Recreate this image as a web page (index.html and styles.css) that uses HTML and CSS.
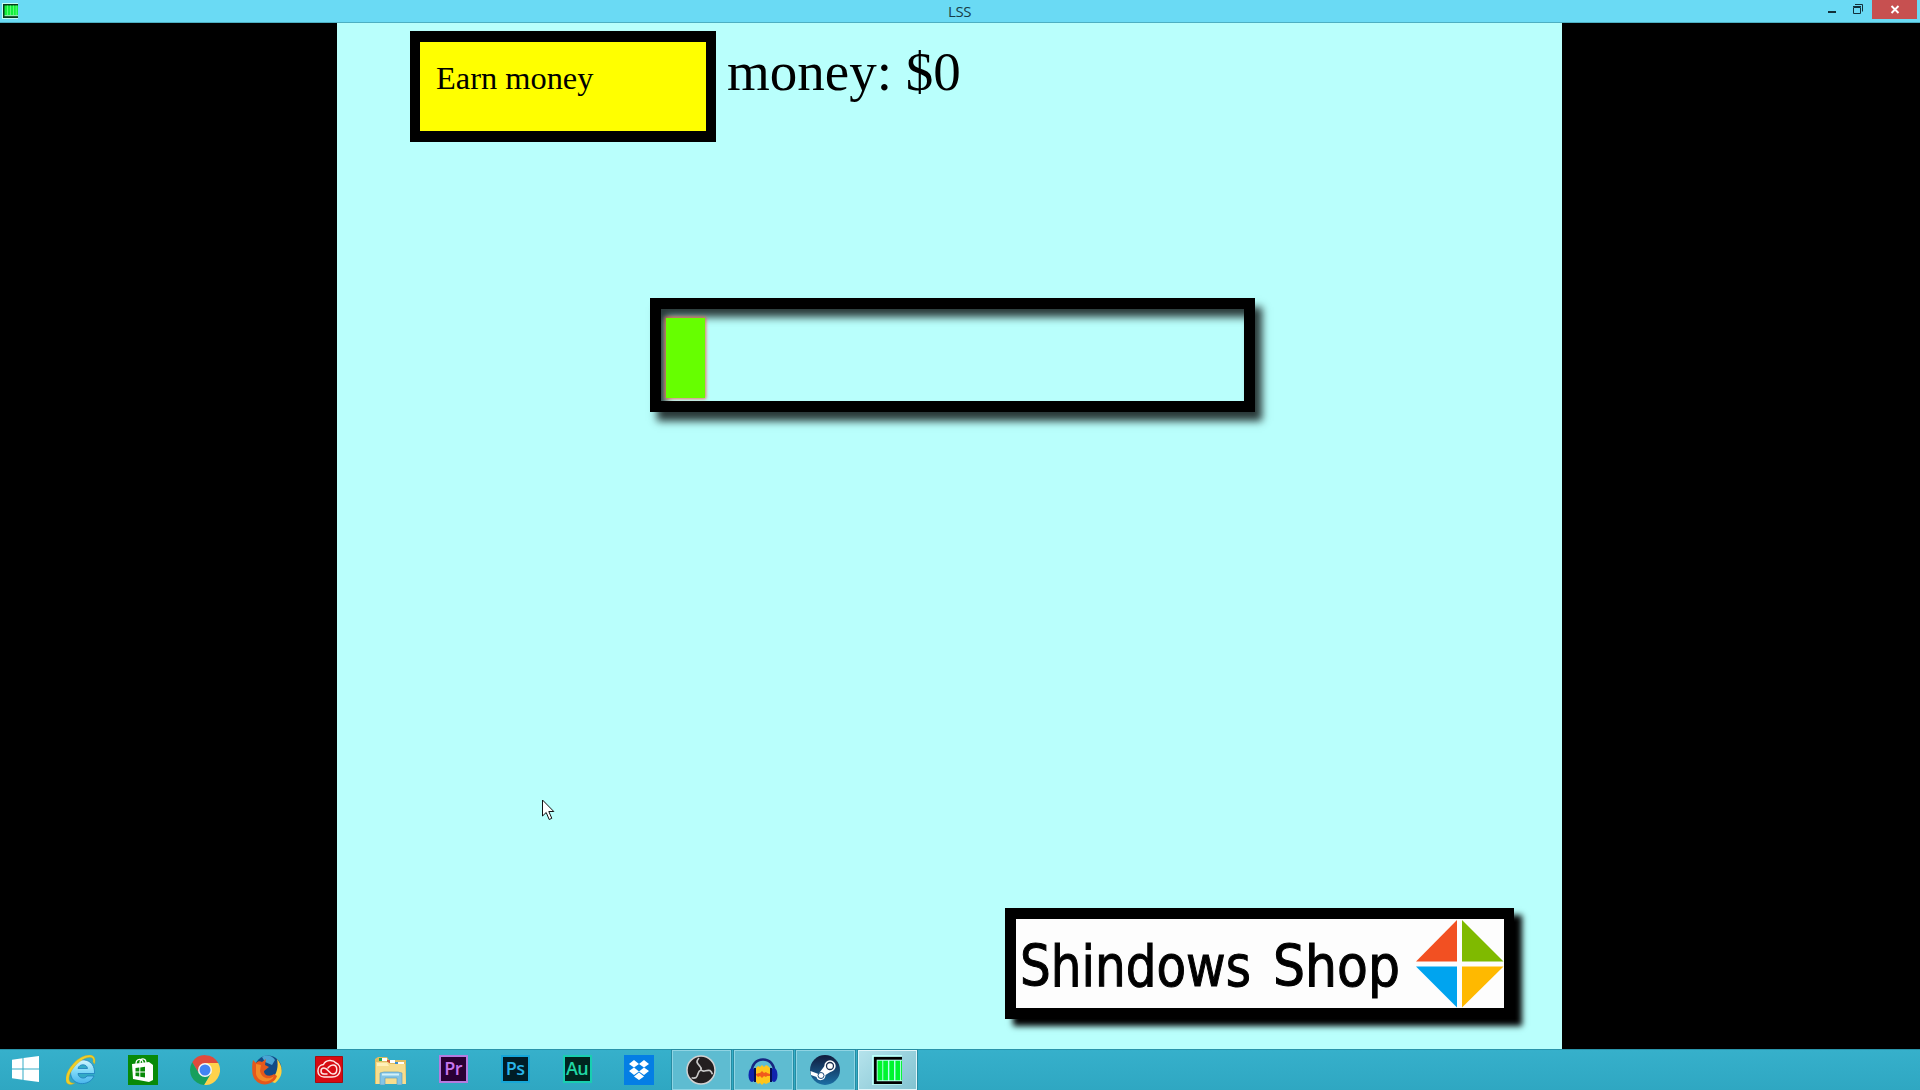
FILE: index.html
```html
<!DOCTYPE html>
<html lang="en">
<head>
<meta charset="utf-8">
<title>LSS</title>
<link rel="stylesheet" href="styles.css">
</head>
<body>
<header class="titlebar">
  <svg class="app-icon" viewBox="0 0 16 16"><path fill="#c5fff4" d="M0 0h16v16H0z"/><path fill="#073a1c" d="M1 1h15v14H1z"/><path fill="#12ef3c" d="M2.500 2.500H16V12H2.500z"/><path fill="#8aefaa" d="M2.500 12H16v1.200H2.500z"/><path stroke="#6cff83" stroke-width=".8" d="M5.500 2.500V12M8.500 2.500V12M11.500 2.500V12M14.200 2.500V12"/></svg>
  <span class="title">LSS</span>
  <div class="controls">
    <svg class="ctl" viewBox="0 0 23 19"><path fill="#12303a" d="M7 11h8v2H7z"/></svg>
    <svg class="ctl restore" viewBox="0 0 23 19"><path fill="none" stroke="#12303a" d="M4.500 7.500h7v6h-7zM4 6.500h8M6 4.500h7.500v7"/></svg>
    <svg class="close" viewBox="0 0 45 19"><path stroke="#fff" stroke-width="1.900" d="M19.500 6l7 7M26.500 6l-7 7"/></svg>
  </div>
</header>

<main class="stage">
  <section class="game">
    <div class="top-row">
      <button class="earn">Earn money</button>
      <span class="money">money: $0</span>
    </div>
    <div class="progress"><div class="fill"></div></div>
    <button class="shop">
      <svg class="shop-face" viewBox="0 0 488 89">
        <g class="shop-text">
          <text x="4" y="67" textLength="231" lengthAdjust="spacingAndGlyphs">Shindows</text>
          <text x="257" y="67" textLength="127" lengthAdjust="spacingAndGlyphs">Shop</text>
        </g>
        <path fill="#f25022" d="M441 1v41.500h-41z"/><path fill="#7fba00" d="M446 1v41.500h41.500z"/>
        <path fill="#00a4ef" d="M441 88.500V47.500h-41z"/><path fill="#ffb900" d="M446 88.500V47.500h41.500z"/>
      </svg>
    </button>
    <svg class="cursor" viewBox="0 0 13 22"><path fill="#fff" stroke="#111" d="M.5 1v16l3.700-3.500 3 7 2.600-1.200-3-6.800h5z"/></svg>
  </section>
</main>

<footer class="taskbar">
  <div class="start"><svg viewBox="0 0 27 26"><path fill="#fff" d="M0 3.800L10.500 2.200V12.500H0zM11.500 2L27 0v12.500H11.500zM0 13.500h10.500V23.800L0 22.300zM11.500 13.500H27V26l-15.500-2z"/></svg></div>
  <div class="task"><svg viewBox="0 0 30 30"><defs><linearGradient id="ie" x2="0" y2="1"><stop stop-color="#d2f6ff"/><stop offset=".5" stop-color="#7cd8f8"/><stop offset="1" stop-color="#49b5ec"/></linearGradient></defs><path fill="url(#ie)" stroke="#1c7fbd" stroke-width=".8" d="M28.500 18.500H12c.5 5 7 6 9 2.500h7C23.500 32 4.500 31.500 4.500 17 4.500 1 29.500 0 28.500 18.500zM12 13.500h9.500c-.5-5-8.500-5-9.500 0z"/><path fill="#f0cf28" stroke="#c9a51c" stroke-width=".4" d="M28.500 9C32-3 18-2.500 8 8-1 17-3 29 4 29.500c1.500 0 3-.5 4.500-1.500C1 29.500 1 20 9 11 17 2 29-1 27 7z"/></svg></div>
  <div class="task"><svg viewBox="0 0 30 30"><path fill="#088a08" d="M0 0h30v30H0z"/><path fill="#fff" d="M4 9l17-2 4 3v15l-4 2-16-3z"/><path fill="none" stroke="#fff" stroke-width="1.300" d="M8 9c0-6 7-6 7-1M12 8c0-6 6-5 6 0"/><path fill="#088a08" d="M7.500 13l3.800-.5v4H7.500zM12.300 12.400l4.700-.6v4.700h-4.700zM7.500 17.500h3.800v4l-3.800-.6zM12.300 17.500H17v4.900l-4.700-.7z"/></svg></div>
  <div class="task"><svg viewBox="0 0 30 30"><path fill="#e04a3c" d="M2.200 7.300A15 15 0 0 1 28.200 8H15l-6.200 10z"/><path fill="#ffd24c" d="M28.200 8A15 15 0 0 1 14 30l7-11.500L15 8z"/><path fill="#179f5d" d="M14 30A15 15 0 0 1 2.200 7.300l7 11.700 11 .5z"/><circle cx="15" cy="15" r="7" fill="#f5f5f5"/><circle cx="15" cy="15" r="5.500" fill="#4284f3"/></svg></div>
  <div class="task"><svg viewBox="0 0 30 30"><circle cx="16" cy="14" r="13.500" fill="#124a86"/><path fill="#49a5d4" d="M10 2c5-3 11-1 13 3l-3 5-7-3z"/><path fill="#ffd040" d="M25 4c7 8 6 18-2 24l-6-2c7-4 10-13 8-22z"/><path fill="#e5581c" d="M1 5l3 3c2-2 4-2 6-1l4-3-1 6 4 2-5 4c0 5 6 6 10 3l3 2C22 31 4 34 .5 19 0 13 0 9 1 5z"/><path fill="#f38a28" d="M4 9l5 1-1 6c2 8 9 9 14 5-3 8-16 7-18-2z"/></svg></div>
  <div class="task"><svg viewBox="0 0 30 30"><path fill="#d70b12" stroke="#a40d13" d="M1.500 1.500h27v26h-27z"/><g fill="none" stroke="#ffe6e4" stroke-width="1.500" stroke-linecap="round"><path d="M18 22H10C2 22 2 10 9.500 9.500 12 4.500 19 4.500 22 8c6 2 6 14-4 14z"/><path d="M13 19h-3c-4 0-4-6 0-6 4 0 5 6 9 6 5 0 5-9 0-9-3 0-4 2-5 3"/></g></svg></div>
  <div class="task"><svg class="wide" viewBox="0 0 32 30"><path fill="#dfbd62" d="M0 4l3-2h9l2 3h17v24H0z"/><path fill="#fff" d="M4 3h8v3H4zM12 5h8v3h-8zM20 7h9v3h-9z"/><path fill="#22aa55" d="M4 3h3v3H4z"/><path fill="#cf5935" d="M12 5h3v3h-3z"/><path fill="#398fd5" d="M20 7h3v3h-3z"/><path fill="#f6dd8e" d="M1 7h12l2 2h15l1 20H1z"/><path fill="#fff0b9" d="M2 8h10l2 3H2z"/><path fill="#83c4e5" stroke="#5597bd" stroke-width=".6" d="M5 18l4-1h14l4 1v12h-5v-7H10v7H5z"/><path fill="#d2f0f9" d="M7 18.500h17v2H7z"/></svg></div>
  <div class="task"><div class="adobe pr">Pr</div></div>
  <div class="task"><div class="adobe ps">Ps</div></div>
  <div class="task"><div class="adobe au">Au</div></div>
  <div class="task"><svg viewBox="0 0 30 30"><path fill="#047ee5" d="M0 0h30v30H0z"/><path fill="#fff" d="M10 5l5 4-5 3.500L5 9zM20 5l5 4-5 3.500L15 9zM10 12.500l5 4-5 3.500-5-4zM20 12.500l5 3.500-5 4-5-3.500zM15 17.500l5 4-5 3.500-5-3.500z"/></svg></div>
  <div class="task open"><svg viewBox="0 0 30 30"><circle cx="15" cy="15" r="14" fill="#231f20" stroke="#d2d2d2" stroke-width="1.500"/><g fill="none" stroke="#c9c9c9" stroke-width="1.700"><path id="blade" d="M15 15c1-4-3-4-4-8 0-2 1-3 2-4"/><use href="#blade" transform="rotate(120 15 15)"/><use href="#blade" transform="rotate(240 15 15)"/></g></svg></div>
  <div class="task open"><svg viewBox="0 0 30 30"><path fill="none" stroke="#172680" stroke-width="2.500" d="M4 18C2 0 28 0 26 18"/><path fill="#ffc51b" d="M8 13l2-2 2 1 2-2 2 2 2-2 2 1 2 2v14l-2 1-2 1-2-1-2 2-2-2-2 1-2-2z"/><path fill="#f15a1c" d="M8 19l3-1 1 0 2-2 2 2 2-1 1 1 3 1v2l-3 0-1 1-2-1-2 2-2-2-2 1-2-2z"/><ellipse cx="4" cy="20" rx="3.500" ry="7" fill="#1024ad"/><ellipse cx="26" cy="20" rx="3.500" ry="7" fill="#1024ad"/><path stroke="#07104f" stroke-width="2" d="M7 13v14M23 13v14"/></svg></div>
  <div class="task open"><svg viewBox="0 0 30 30"><defs><linearGradient id="st" x2="0" y2="1"><stop stop-color="#111b3c"/><stop offset="1" stop-color="#1b6fa5"/></linearGradient></defs><circle cx="15" cy="15" r="15" fill="url(#st)"/><path fill="#fff" d="M.5 16l8 3 6-8 9 4-8 5c0 6-8 7-9 2L1 20z"/><circle cx="20" cy="11" r="5.700" fill="#fff"/><circle cx="20" cy="11" r="3.500" fill="#fff" stroke="#1b2e50" stroke-width="1.300"/><circle cx="11" cy="20.500" r="3" fill="none" stroke="#1e4c7b" stroke-width="1"/></svg></div>
  <div class="task open active"><svg class="wide" viewBox="0 0 32 32"><path fill="#b9fffa" d="M0 0h32v32H0z"/><path fill="#000" d="M2 2h30v29H2z"/><path fill="#b9fff0" d="M5 5h27v23H5z"/><path fill="#00f52e" d="M6 6h5v21H6zM12 6h5v21h-5zM18.500 6h5v21h-5zM25 6h5v21h-5zM31 6h1v21h-1z"/></svg></div>
</footer>
</body>
</html>
```

FILE: styles.css
```css
* { box-sizing: border-box; }
body {
  margin: 0;
  width: 1920px;
  height: 1090px;
  overflow: hidden;
  display: flex;
  flex-direction: column;
  background: #000;
  font-family: "Liberation Serif", serif;
}
button { appearance: none; border-radius: 0; margin: 0; color: #000; font-family: inherit; }
svg { display: block; }

.titlebar {
  height: 23px;
  flex: none;
  display: grid;
  grid-template-columns: 1fr auto 1fr;
  align-items: start;
  background: #6adaf4;
  border-bottom: 1px solid #4dafc2;
}
.app-icon { width: 16px; height: 16px; margin: 3px 0 0 2px; }
.title { font: 15px/22px "Open Sans", sans-serif; color: #173c47; letter-spacing: -.4px; margin-right: 1px; }
.controls { display: flex; justify-content: flex-end; padding-right: 3px; }
.ctl { width: 23px; height: 19px; margin-right: 5px; }
.restore { margin-right: 0; }
.close { width: 45px; height: 19px; background: #c75050; }

.stage { height: 1026px; flex: none; display: flex; padding-left: 337px; }
.game {
  position: relative;
  width: 1225px;
  display: flex;
  flex-direction: column;
  padding: 8px 48px 30px 73px;
  background: #b9fffc;
}
.top-row { display: flex; align-items: flex-start; gap: 11px; }
.earn {
  width: 306px;
  height: 111px;
  border: solid #000;
  border-width: 11px 10px 11px 10px;
  padding: 0 0 17px 16px;
  background: #ff0;
  font-size: 32.4px;
  text-align: left;
}
.money { font-size: 55px; line-height: 64px; margin-top: 9px; white-space: nowrap; }

.progress {
  width: 605px;
  height: 114px;
  margin: 156px 0 0 240px;
  padding: 9px 0 0 5px;
  border: 11px solid #000;
  box-shadow: 7px 9px 8px rgba(0, 0, 0, .78), inset 6px 9px 8px -1px rgba(0, 0, 0, .78);
}
.fill { width: 39px; height: 80px; background: #6f0; box-shadow: 0 0 3px 1px rgba(240, 90, 60, .85); }

.shop {
  align-self: flex-end;
  width: 509px;
  height: 111px;
  margin-top: auto;
  padding: 0;
  border: 11px solid #000;
  border-right-width: 10px;
  background: #fdfdfd;
  box-shadow: 8px 7px 6px #000;
}
.shop-face { width: 488px; height: 89px; }
.shop-text { font: 57.5px "DejaVu Sans Condensed", "DejaVu Sans", sans-serif; stroke: #000; stroke-width: 1px; }

.cursor { position: absolute; left: 205px; top: 776px; width: 13px; height: 22px; }

.taskbar {
  flex: 1;
  display: flex;
  gap: 3px;
  border-top: 1px solid #2994aa;
  background: linear-gradient(#36b0cb, #2fa7c2);
}
.start { width: 49px; padding: 6px 0 0 12px; }
.start svg { width: 27px; height: 26px; }
.task { width: 59px; height: 40px; flex: none; display: flex; justify-content: center; padding: 5px 1px 0 0; }
.task svg { width: 30px; height: 30px; }
.task .wide { width: 32px; }
.open { border: 1px solid #8fd4e3; padding-top: 4px; background: #5ebcd1; box-shadow: 0 0 0 1px #268ca2; }
.active { border-color: #e2f6fa; background: linear-gradient(135deg, #b5e3ec, #82c3d1); }
.adobe {
  width: 29px;
  height: 28px;
  border: 2px solid;
  font: 600 18px/22px "Open Sans", sans-serif;
  text-align: center;
  letter-spacing: -.7px;
}
.pr { color: #c876ee; background: #2a0034; border-color: #b57be0; }
.ps { color: #29b4e8; background: #001d26; border-color: #16a7d8; }
.au { color: #20d6a5; background: #00251f; border-color: #18cfb0; }
```
